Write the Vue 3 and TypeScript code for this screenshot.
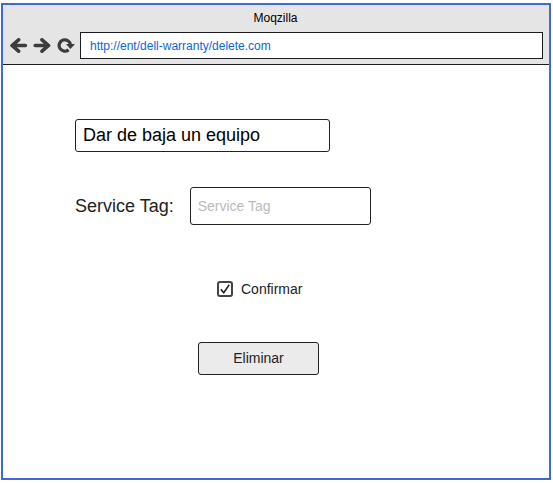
<script setup lang="ts">
import { ref } from 'vue'

const address = ref('http://ent/dell-warranty/delete.com')
const action = ref('Dar de baja un equipo')
const serviceTag = ref('')
const confirmed = ref(true)
</script>

<template>
  <div class="page">
    <div class="browser">
      <header class="chrome">
        <div class="title">Moqzilla</div>
        <nav class="toolbar">
          <button class="tool" type="button" aria-label="Atrás">
            <svg viewBox="0 0 20 16" width="20" height="16">
              <path d="M10.6 1.8 L4 7.5 L10.6 13.2 M4.5 7.5 H17.4" />
            </svg>
          </button>
          <button class="tool" type="button" aria-label="Adelante">
            <svg viewBox="0 0 20 16" width="20" height="16">
              <path d="M10 1.8 L16.6 7.5 L10 13.2 M16 7.5 H3.2" />
            </svg>
          </button>
          <button class="tool" type="button" aria-label="Recargar">
            <svg viewBox="0 0 20 16" width="20" height="16">
              <path class="arc" d="M12.6 11.8 A5.7 5.7 0 1 1 14.5 7" />
              <path class="head" d="M10 6 H19 L14.4 11 Z" />
            </svg>
          </button>
          <input v-model="address" class="address" type="text" aria-label="Dirección" />
        </nav>
      </header>
      <main class="content">
        <input v-model="action" class="field action" type="text" aria-label="Acción" />
        <form class="form" @submit.prevent>
          <div class="row">
            <label class="label" for="service-tag">Service Tag:</label>
            <input id="service-tag" v-model="serviceTag" class="field tag" type="text" placeholder="Service Tag" />
          </div>
          <label class="confirm">
            <input v-model="confirmed" class="check" type="checkbox" />
            <span class="box">
              <svg v-if="confirmed" viewBox="0 0 12 12" width="12" height="12">
                <path d="M1.8 6.4 L4.8 9.8 L10.2 1.8" />
              </svg>
            </span>
            Confirmar
          </label>
          <button class="submit" type="submit">Eliminar</button>
        </form>
      </main>
    </div>
  </div>
</template>

<style>
body {
  margin: 0;
  background: #fff;
}
</style>

<style scoped>
.page,
.page * {
  box-sizing: border-box;
}

.page {
  display: flex;
  min-height: 100vh;
  padding: 3px 2px 3px 1px;
  font-family: "Liberation Sans", Arial, sans-serif;
  font-size: 14px;
  color: #222;
}

input,
button {
  margin: 0;
  font-family: inherit;
  color: inherit;
}

.browser {
  flex: 1;
  border: 2px solid #4169d3;
}

.chrome {
  padding: 5px 6px 5px 5px;
  border-bottom: 1px solid #1b1b20;
  background: #e5e5e5;
}

.title {
  font-size: 12px;
  line-height: 16px;
  text-align: center;
  color: #000;
}

.toolbar {
  display: flex;
  align-items: center;
  gap: 4px;
  margin-top: 6px;
}

.tool {
  display: flex;
  padding: 0;
  border: 0;
  background: none;
}

.tool path {
  fill: none;
  stroke: #3c3c3c;
  stroke-width: 3.6;
  stroke-linecap: round;
  stroke-linejoin: round;
}

.tool .arc {
  stroke-width: 3.2;
  stroke-linecap: butt;
}

.tool .head {
  fill: #3c3c3c;
  stroke: none;
}

.address {
  flex: 1;
  min-width: 0;
  height: 27px;
  padding: 0 9px;
  border: 1px solid #1b1b20;
  background: #fff;
  font-size: 12px;
  color: #0a66dc;
}

.content {
  padding: 54px 72px;
}

.field {
  padding: 0 7px;
  border: 1px solid #222;
  border-radius: 3px;
  background: #fff;
}

.action {
  display: block;
  width: 255px;
  height: 33px;
  font-size: 18px;
  color: #000;
}

.form {
  display: flex;
  flex-direction: column;
  align-items: flex-start;
  margin-top: 35px;
}

.row {
  display: flex;
  align-items: center;
  gap: 16px;
}

.label {
  font-size: 18px;
}

.tag {
  width: 181px;
  height: 38px;
  font-size: 14px;
}

.tag::placeholder {
  color: #bbb;
  opacity: 1;
}

.confirm {
  display: flex;
  align-items: center;
  gap: 8px;
  margin: 56px 0 0 142px;
  line-height: 16px;
}

.check {
  position: absolute;
  width: 16px;
  height: 16px;
  opacity: 0;
}

.box {
  display: flex;
  flex: none;
  align-items: center;
  justify-content: center;
  width: 16px;
  height: 16px;
  border: 2px solid #444;
  border-radius: 3px;
}

.box svg {
  flex: none;
}

.box path {
  fill: none;
  stroke: #222;
  stroke-width: 1.6;
}

.submit {
  width: 121px;
  height: 33px;
  margin: 45px 0 0 123px;
  padding: 0 0 2px;
  border: 1px solid #222;
  border-radius: 3px;
  background: #ebebeb;
  font-size: 14px;
}
</style>
